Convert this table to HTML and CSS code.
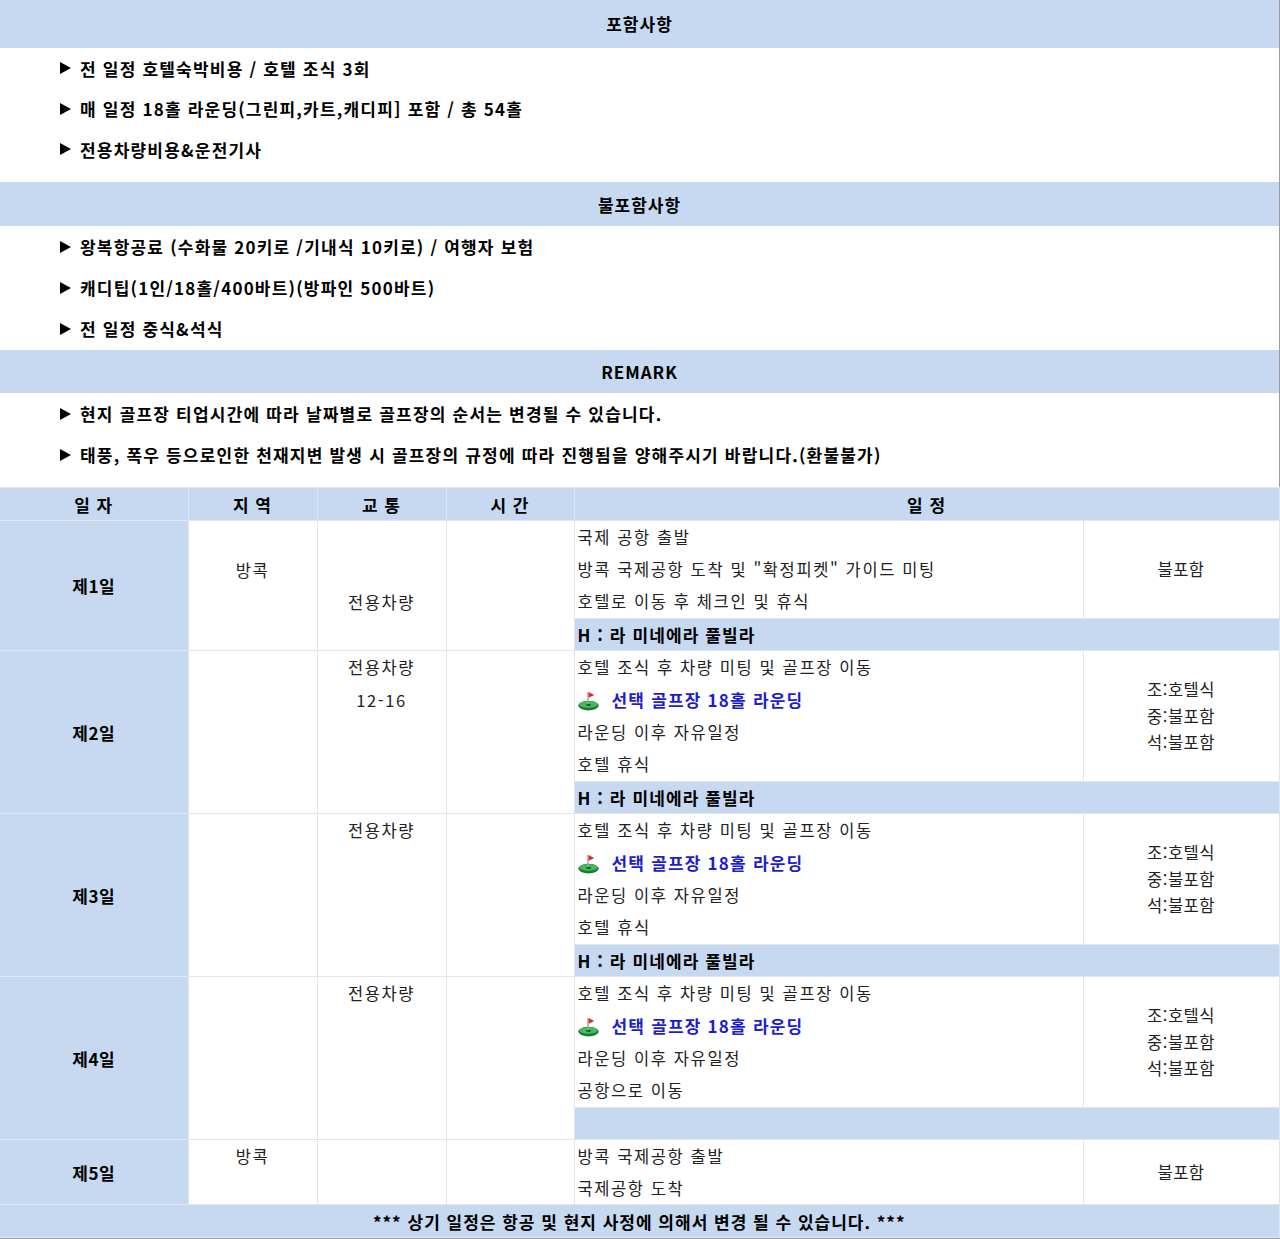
FILE: index.html
```html
<!DOCTYPE html>
<html lang="ko">
<head>
<meta charset="utf-8">
<link rel="stylesheet" href="styles.css">
</head>
<body>
<div class="page">
  <div class="band b1">포함사항</div>
  <div class="list l1">
    <div class="item"><span class="arrow"></span>전 일정 호텔숙박비용 / 호텔 조식 3회</div>
    <div class="item"><span class="arrow"></span>매 일정 18홀 라운딩(그린피,카트,캐디피] 포함 / 총 54홀</div>
    <div class="item"><span class="arrow"></span>전용차량비용&amp;운전기사</div>
  </div>
  <div class="band b2">불포함사항</div>
  <div class="list l2">
    <div class="item"><span class="arrow"></span>왕복항공료 (수화물 20키로 /기내식 10키로) / 여행자 보험</div>
    <div class="item"><span class="arrow"></span>캐디팁(1인/18홀/400바트)(방파인 500바트)</div>
    <div class="item"><span class="arrow"></span>전 일정 중식&amp;석식</div>
  </div>
  <div class="band b3">REMARK</div>
  <div class="list l3">
    <div class="item"><span class="arrow"></span>현지 골프장 티업시간에 따라 날짜별로 골프장의 순서는 변경될 수 있습니다.</div>
    <div class="item"><span class="arrow"></span>태풍, 폭우 등으로인한 천재지변 발생 시 골프장의 규정에 따라 진행됨을 양해주시기 바랍니다.(환불불가)</div>
  </div>

  <table class="sched">
    <colgroup>
      <col class="c-day"><col class="c-reg"><col class="c-tr"><col class="c-time"><col class="c-sch"><col class="c-meal">
    </colgroup>
    <thead>
      <tr class="hd">
        <th class="first">일 자</th><th>지 역</th><th>교 통</th><th>시 간</th><th colspan="2">일 정</th>
      </tr>
    </thead>
    <tbody>
      <!-- Day 1 -->
      <tr>
        <td class="day" rowspan="4">제1일</td>
        <td class="top" rowspan="4"><div class="ln"></div><div class="ln">방콕</div></td>
        <td class="top" rowspan="4"><div class="ln"></div><div class="ln"></div><div class="ln">전용차량</div></td>
        <td rowspan="4"></td>
        <td class="sch">국제 공항 출발</td>
        <td class="meal" rowspan="3">불포함</td>
      </tr>
      <tr><td class="sch">방콕 국제공항 도착 및 "확정피켓" 가이드 미팅</td></tr>
      <tr><td class="sch">호텔로 이동 후 체크인 및 휴식</td></tr>
      <tr><td class="hotel" colspan="2">H : 라 미네에라 풀빌라</td></tr>

      <!-- Day 2 -->
      <tr>
        <td class="day" rowspan="5">제2일</td>
        <td rowspan="5"></td>
        <td class="top" rowspan="5"><div class="ln">전용차량</div><div class="ln">12-16</div></td>
        <td rowspan="5"></td>
        <td class="sch">호텔 조식 후 차량 미팅 및 골프장 이동</td>
        <td class="meal" rowspan="4"><div>조:호텔식</div><div>중:불포함</div><div>석:불포함</div></td>
      </tr>
      <tr><td class="sch golf"><svg class="flag" width="21" height="20" viewBox="0 0 21 20"><ellipse cx="10.5" cy="14.6" rx="10.2" ry="4.8" fill="#1c7a35"/><ellipse cx="10.5" cy="13.4" rx="9" ry="3.3" fill="#43b960"/><ellipse cx="10.5" cy="13.8" rx="2.4" ry="1.1" fill="#0d4a1c"/><line x1="10" y1="1" x2="10" y2="13.6" stroke="#a0a0a0" stroke-width="1.4"/><path d="M10.6 1 L16.2 3.9 L10.6 6.8 Z" fill="#e3262a"/></svg><span class="blue">선택 골프장 18홀 라운딩</span></td></tr>
      <tr><td class="sch">라운딩 이후 자유일정</td></tr>
      <tr><td class="sch">호텔 휴식</td></tr>
      <tr><td class="hotel" colspan="2">H : 라 미네에라 풀빌라</td></tr>

      <!-- Day 3 -->
      <tr>
        <td class="day" rowspan="5">제3일</td>
        <td rowspan="5"></td>
        <td class="top" rowspan="5"><div class="ln">전용차량</div></td>
        <td rowspan="5"></td>
        <td class="sch">호텔 조식 후 차량 미팅 및 골프장 이동</td>
        <td class="meal" rowspan="4"><div>조:호텔식</div><div>중:불포함</div><div>석:불포함</div></td>
      </tr>
      <tr><td class="sch golf"><svg class="flag" width="21" height="20" viewBox="0 0 21 20"><ellipse cx="10.5" cy="14.6" rx="10.2" ry="4.8" fill="#1c7a35"/><ellipse cx="10.5" cy="13.4" rx="9" ry="3.3" fill="#43b960"/><ellipse cx="10.5" cy="13.8" rx="2.4" ry="1.1" fill="#0d4a1c"/><line x1="10" y1="1" x2="10" y2="13.6" stroke="#a0a0a0" stroke-width="1.4"/><path d="M10.6 1 L16.2 3.9 L10.6 6.8 Z" fill="#e3262a"/></svg><span class="blue">선택 골프장 18홀 라운딩</span></td></tr>
      <tr><td class="sch">라운딩 이후 자유일정</td></tr>
      <tr><td class="sch">호텔 휴식</td></tr>
      <tr><td class="hotel" colspan="2">H : 라 미네에라 풀빌라</td></tr>

      <!-- Day 4 -->
      <tr>
        <td class="day" rowspan="5">제4일</td>
        <td rowspan="5"></td>
        <td class="top" rowspan="5"><div class="ln">전용차량</div></td>
        <td rowspan="5"></td>
        <td class="sch">호텔 조식 후 차량 미팅 및 골프장 이동</td>
        <td class="meal" rowspan="4"><div>조:호텔식</div><div>중:불포함</div><div>석:불포함</div></td>
      </tr>
      <tr><td class="sch golf"><svg class="flag" width="21" height="20" viewBox="0 0 21 20"><ellipse cx="10.5" cy="14.6" rx="10.2" ry="4.8" fill="#1c7a35"/><ellipse cx="10.5" cy="13.4" rx="9" ry="3.3" fill="#43b960"/><ellipse cx="10.5" cy="13.8" rx="2.4" ry="1.1" fill="#0d4a1c"/><line x1="10" y1="1" x2="10" y2="13.6" stroke="#a0a0a0" stroke-width="1.4"/><path d="M10.6 1 L16.2 3.9 L10.6 6.8 Z" fill="#e3262a"/></svg><span class="blue">선택 골프장 18홀 라운딩</span></td></tr>
      <tr><td class="sch">라운딩 이후 자유일정</td></tr>
      <tr><td class="sch">공항으로 이동</td></tr>
      <tr><td class="hotel" colspan="2"></td></tr>

      <!-- Day 5 -->
      <tr>
        <td class="day" rowspan="2">제5일</td>
        <td class="top" rowspan="2"><div class="ln">방콕</div></td>
        <td rowspan="2"></td>
        <td rowspan="2"></td>
        <td class="sch">방콕 국제공항 출발</td>
        <td class="meal" rowspan="2">불포함</td>
      </tr>
      <tr><td class="sch">국제공항 도착</td></tr>

      <tr class="ft"><td colspan="6">*** 상기 일정은 항공 및 현지 사정에 의해서 변경 될 수 있습니다. ***</td></tr>
    </tbody>
  </table>
</div>
</body>
</html>
```

FILE: styles.css
```css
* { box-sizing: border-box; }
html, body { margin: 0; padding: 0; background: #fff; }
body {
  font-family: "Noto Sans CJK KR", "Noto Sans", sans-serif;
  color: #222;
}
.page {
  width: 1280px;
  border-right: 1px solid #9c9c9c;
  border-bottom: 1px solid #9c9c9c;
}
.band {
  background: #c6d9f1;
  display: flex;
  align-items: center;
  justify-content: center;
  font-weight: 700;
  font-size: 17px;
  letter-spacing: 1px;
  color: #000;
}
.b1 { height: 48px; padding-bottom: 2px; }
.b2 { height: 44px; }
.b3 { height: 43px; }
.list { padding-left: 60px; }
.l1 { padding-bottom: 12.5px; }
.l1 .item { height: 40.5px; }
.l2 { padding-bottom: 1px; }
.l2 .item { height: 41px; }
.l3 { padding-bottom: 12px; }
.l3 .item { height: 41px; }
.item {
  display: flex;
  align-items: center;
  font-weight: 700;
  font-size: 17px;
  letter-spacing: 1.2px;
  color: #000;
  white-space: nowrap;
}
.arrow {
  display: inline-block;
  width: 0;
  height: 0;
  border-left: 11px solid #000;
  border-top: 6px solid transparent;
  border-bottom: 6px solid transparent;
  margin-right: 9px;
}
.sched {
  width: 1279px;
  border-collapse: collapse;
  table-layout: fixed;
  font-size: 16.5px;
  letter-spacing: 1.6px;
}
.c-day { width: 188px; }
.c-reg { width: 129px; }
.c-tr { width: 129px; }
.c-time { width: 128px; }
.c-sch { width: 509px; }
.c-meal { width: 196px; }
.sched th, .sched td {
  border: 1px solid #dfe6ee;
  padding: 0;
  text-align: center;
  vertical-align: middle;
  white-space: nowrap;
}
.sched th {
  background: #c6d9f1;
  font-weight: 700;
  font-size: 17px;
  letter-spacing: 1px;
  color: #000;
  height: 33px;
}
.sched th.first, .sched td.day { border-left: none; }
.sched tbody tr { height: 32.6px; }
.sched td.day {
  background: #c6d9f1;
  font-weight: 700;
  font-size: 17px;
  color: #000;
  letter-spacing: 0.5px;
}
.sched td.top { vertical-align: top; }
.ln { height: 32.6px; line-height: 32.6px; }
.sched td.sch {
  text-align: left;
  padding-left: 3px;
  line-height: 31px;
  border-top: none;
  border-bottom: none;
}
.sched td.golf { padding-left: 3px; }
.flag {
  vertical-align: -4px;
  margin-right: 13px;
}
.blue {
  color: #1d1dcf;
  font-weight: 700;
  font-size: 17px;
  letter-spacing: 1.2px;
}
.sched td.hotel {
  background: #c6d9f1;
  text-align: left;
  padding-left: 3px;
  font-weight: 700;
  font-size: 17px;
  letter-spacing: 1.1px;
  color: #000;
}
.sched td.meal {
  line-height: 26.5px;
  letter-spacing: 0.5px;
}
.sched tr.ft td {
  background: #c6d9f1;
  font-weight: 700;
  font-size: 17px;
  letter-spacing: 1px;
  color: #000;
  height: 32px;
  border-left: none;
}
```
